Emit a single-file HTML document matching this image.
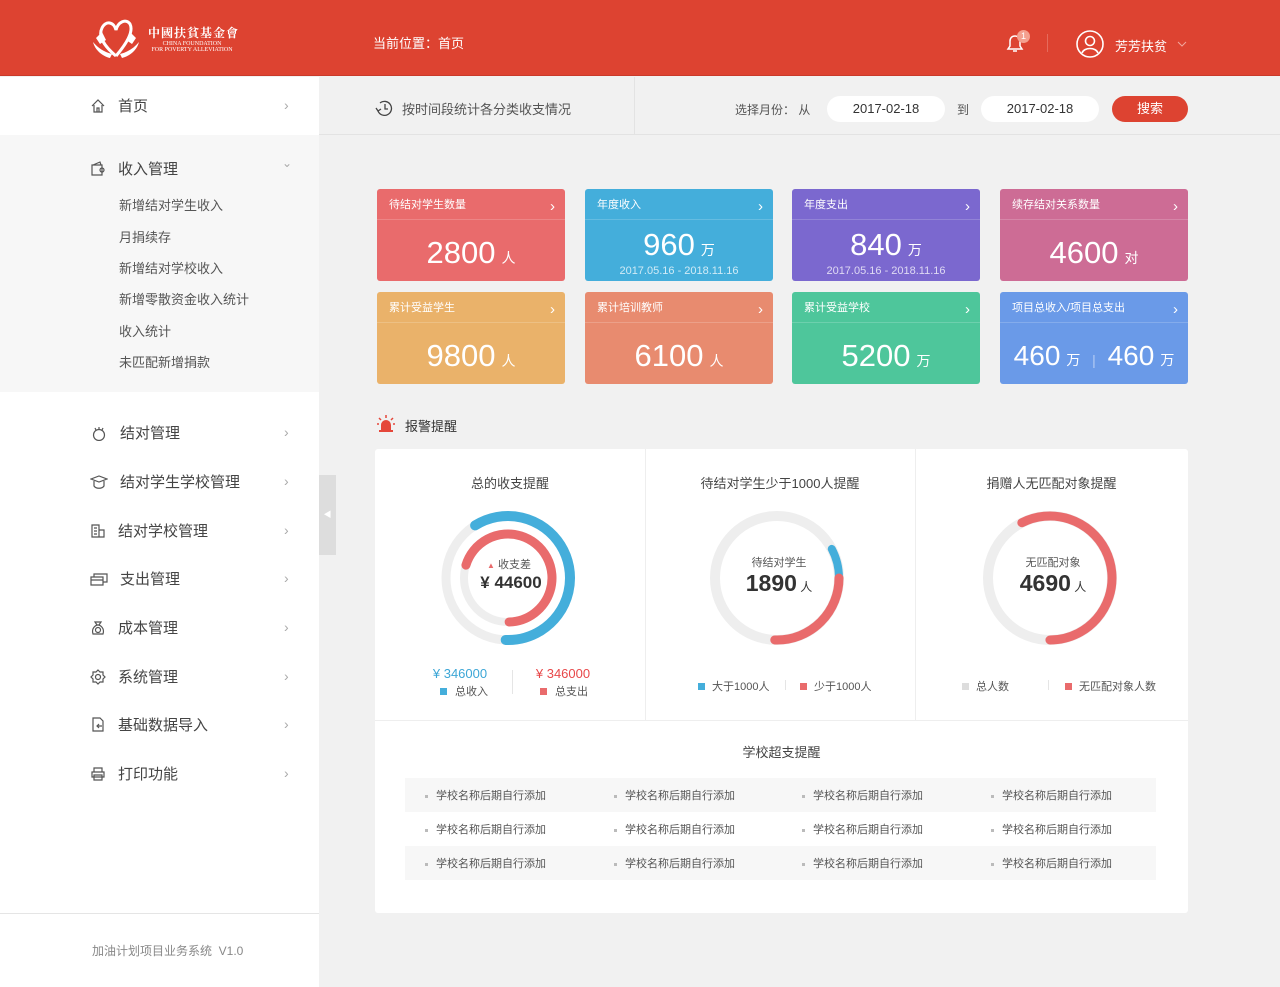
<!DOCTYPE html>
<html><head><meta charset="utf-8"><style>
*{margin:0;padding:0;box-sizing:border-box}
body{width:1280px;height:987px;position:relative;background:#f1f1f1;font-family:"Liberation Sans","Noto Sans CJK SC",sans-serif;overflow:hidden;color:#333}
.a{position:absolute}
.hdr{left:0;top:0;width:1280px;height:76px;background:#dd4331;border-bottom:1px solid #c93a2a}
.side{left:0;top:77px;width:319px;height:910px;background:#fff}
.mi{position:absolute;left:90px;font-size:15px;color:#444;display:flex;align-items:center}
.mi svg{margin-right:12px}
.arr{position:absolute;left:284px;color:#aaa;font-size:14px}
.sub{position:absolute;left:119px;font-size:13px;color:#555}
.card{position:absolute;width:188px;height:92px;border-radius:3px;color:#fff}
.card .t{height:31px;line-height:33px;font-size:11px;padding-left:12px;border-bottom:1px solid rgba(255,255,255,.18);position:relative}
.card .t:after{content:"›";position:absolute;right:10px;top:1px;font-size:15px}
.card .v{text-align:center;font-size:31px;line-height:38px;margin-top:14px}
.card .v small{font-size:14px;margin-left:6px}
.card .d{text-align:center;font-size:11px;opacity:.75;margin-top:-4px}
.sc{position:absolute;font-size:11px;color:#555}
.sc:before{content:"";display:inline-block;width:3px;height:3px;background:#bbb;margin-right:8px;vertical-align:middle}
</style></head><body>
<div class="a hdr"></div>
<svg class="a" style="left:90px;top:16px" width="52" height="46" viewBox="0 0 52 46"><path d="M26 40 C14 30 8 20 12 12 C16 4 24 6 26 14 C28 6 36 2 40 8 C44 16 36 28 26 40" fill="none" stroke="#fff" stroke-width="3"/><path d="M3 26 C8 32 14 36 22 38 L20 42 C12 40 5 34 3 26Z M49 26 C44 32 38 36 30 38 L32 42 C40 40 47 34 49 26Z M6 22 l6 -6 4 8 -6 4Z M46 22 l-6 -6 -4 8 6 4Z" fill="#fff"/></svg>
<div class="a" style="left:148px;top:24px;color:#fff;font-family:'Noto Serif CJK SC',serif;font-size:12px;letter-spacing:1px;font-weight:bold">中國扶貧基金會</div>
<div class="a" style="left:148px;top:41px;color:#fff;font-family:'Liberation Serif',serif;font-size:6px;line-height:6px;text-align:center;width:88px">CHINA FOUNDATION<br>FOR POVERTY ALLEVIATION</div>
<div class="a" style="left:373px;top:33px;color:#fff;font-size:13px">当前位置：首页</div>
<svg class="a" style="left:1004px;top:33px" width="22" height="22" viewBox="0 0 22 22"><path d="M4 16 L18 16 L16 13 L16 8 C16 5 14 3 11 3 C8 3 6 5 6 8 L6 13Z M9 18 L13 18" fill="none" stroke="#fff" stroke-width="1.5"/></svg>
<div class="a" style="left:1017px;top:30px;width:13px;height:13px;border-radius:50%;background:#f4a08f;color:#fff;font-size:9px;text-align:center;line-height:13px">1</div>
<div class="a" style="left:1047px;top:34px;width:1px;height:18px;background:#e66b5c"></div>
<svg class="a" style="left:1075px;top:29px" width="30" height="30" viewBox="0 0 30 30"><circle cx="15" cy="15" r="13" fill="none" stroke="#fff" stroke-width="1.6"/><circle cx="15" cy="12" r="4.5" fill="none" stroke="#fff" stroke-width="1.6"/><path d="M7 24 C9 18 21 18 23 24" fill="none" stroke="#fff" stroke-width="1.6"/></svg>
<div class="a" style="left:1115px;top:36px;color:#fff;font-size:13px">芳芳扶贫</div>
<svg class="a" style="left:1177px;top:41px" width="10" height="6"><path d="M1 1 L5 5 L9 1" fill="none" stroke="#f2a79d" stroke-width="1"/></svg>

<div class="a side"></div>
<div class="a" style="left:0;top:135px;width:319px;height:257px;background:#f7f7f7"></div>
<div class="a" style="left:0;top:913px;width:319px;height:1px;background:#e5e5e5"></div>
<div class="a" style="left:92px;top:942px;font-size:12px;color:#888">加油计划项目业务系统&nbsp; V1.0</div>
<div class="a" style="left:319px;top:475px;width:17px;height:80px;background:#ddd;color:#fff;font-size:8px;text-align:center;line-height:80px">◀</div>

<div class="mi" style="top:95px"><svg width="16" height="16" viewBox="0 0 16 16" fill="none" stroke="#555" stroke-width="1.2"><path d="M2 8 L8 2 L14 8 M4 7 V14 H12 V7 M7 14 V10 H9 V14"/></svg>首页</div><span class="arr" style="top:97px">›</span>
<div class="mi" style="top:158px"><svg width="16" height="16" viewBox="0 0 16 16" fill="none" stroke="#555" stroke-width="1.2"><path d="M2 4 H12 V14 H2Z M3 4 L10 1 L11 4"/><circle cx="12" cy="9" r="2"/></svg>收入管理</div><span class="arr" style="top:156px;left:282px;font-size:12px">⌄</span>
<div class="sub" style="top:195px">新增结对学生收入</div>
<div class="sub" style="top:227px">月捐续存</div>
<div class="sub" style="top:258px">新增结对学校收入</div>
<div class="sub" style="top:289px">新增零散资金收入统计</div>
<div class="sub" style="top:321px">收入统计</div>
<div class="sub" style="top:352px">未匹配新增捐款</div>
<div class="mi" style="top:422px"><svg width="18" height="16" viewBox="0 0 18 16" fill="none" stroke="#555" stroke-width="1.2"><circle cx="9" cy="10" r="5.5"/><path d="M5 3 l1 2 M9 2 v2 M13 3 l-1 2"/></svg>结对管理</div><span class="arr" style="top:424px">›</span>
<div class="mi" style="top:471px"><svg width="18" height="16" viewBox="0 0 18 16" fill="none" stroke="#555" stroke-width="1.2"><path d="M1 5 L9 2 L17 5 L9 8Z M4 7 V12 C6 15 12 15 14 12 V7"/></svg>结对学生学校管理</div><span class="arr" style="top:473px">›</span>
<div class="mi" style="top:520px"><svg width="16" height="16" viewBox="0 0 16 16" fill="none" stroke="#555" stroke-width="1.2"><path d="M2 2 H9 V14 H2Z M9 7 H14 V14 H9 M4 5 h3 M4 8 h3 M4 11 h3"/></svg>结对学校管理</div><span class="arr" style="top:522px">›</span>
<div class="mi" style="top:568px"><svg width="18" height="16" viewBox="0 0 18 16" fill="none" stroke="#555" stroke-width="1.2"><path d="M1 6 H13 V14 H1Z M1 9 H13 M4 6 V3 H17 V11 H13"/></svg>支出管理</div><span class="arr" style="top:570px">›</span>
<div class="mi" style="top:617px"><svg width="16" height="16" viewBox="0 0 16 16" fill="none" stroke="#555" stroke-width="1.2"><path d="M5 2 H11 L9 5 H7Z M3 14 C1 8 6 5 8 5 C10 5 15 8 13 14Z"/><circle cx="8" cy="10" r="2.5"/></svg>成本管理</div><span class="arr" style="top:619px">›</span>
<div class="mi" style="top:666px"><svg width="16" height="16" viewBox="0 0 16 16" fill="none" stroke="#555" stroke-width="1.2"><path d="M8 1 L10 3 L13 3 L13 6 L15 8 L13 10 L13 13 L10 13 L8 15 L6 13 L3 13 L3 10 L1 8 L3 6 L3 3 L6 3Z"/><circle cx="8" cy="8" r="2.5"/></svg>系统管理</div><span class="arr" style="top:668px">›</span>
<div class="mi" style="top:714px"><svg width="16" height="16" viewBox="0 0 16 16" fill="none" stroke="#555" stroke-width="1.2"><path d="M3 1 H10 L13 4 V14 H3Z M7 9 H12 M9 7 L7 9 L9 11"/></svg>基础数据导入</div><span class="arr" style="top:716px">›</span>
<div class="mi" style="top:763px"><svg width="16" height="16" viewBox="0 0 16 16" fill="none" stroke="#555" stroke-width="1.2"><path d="M4 6 V2 H12 V6 M2 6 H14 V11 H2Z M4 9 H12 V14 H4Z"/></svg>打印功能</div><span class="arr" style="top:765px">›</span>

<div class="a" style="left:319px;top:77px;width:961px;height:58px;border-bottom:1px solid #e3e3e3"></div>
<div class="a" style="left:634px;top:77px;width:1px;height:58px;background:#e3e3e3"></div>
<svg class="a" style="left:375px;top:99px" width="19" height="18" viewBox="0 0 19 18" fill="none" stroke="#444" stroke-width="1.3"><path d="M5 4 A7 7 0 1 1 3 12"/><path d="M10 5 V10 H13 M1 9 L3 12 L6 10"/></svg>
<div class="a" style="left:402px;top:99px;font-size:13px;color:#555">按时间段统计各分类收支情况</div>
<div class="a" style="left:735px;top:101px;font-size:12px;color:#555">选择月份： 从</div>
<div class="a" style="left:827px;top:96px;width:118px;height:26px;border-radius:13px;background:#fff;text-align:center;line-height:26px;font-size:13px;color:#333">2017-02-18</div>
<div class="a" style="left:957px;top:101px;font-size:12px;color:#555">到</div>
<div class="a" style="left:981px;top:96px;width:118px;height:26px;border-radius:13px;background:#fff;text-align:center;line-height:26px;font-size:13px;color:#333">2017-02-18</div>
<div class="a" style="left:1112px;top:96px;width:76px;height:26px;border-radius:13px;background:#dd4331;text-align:center;line-height:26px;font-size:13px;color:#fff">搜索</div>

<div class="card" style="left:377px;top:189px;background:#e96b6c"><div class="t">待结对学生数量</div><div class="v">2800<small>人</small></div></div>
<div class="card" style="left:585px;top:189px;background:#44aedb"><div class="t">年度收入</div><div class="v" style="margin-top:6px">960<small>万</small></div><div class="d">2017.05.16 - 2018.11.16</div></div>
<div class="card" style="left:792px;top:189px;background:#7b68cf"><div class="t">年度支出</div><div class="v" style="margin-top:6px">840<small>万</small></div><div class="d">2017.05.16 - 2018.11.16</div></div>
<div class="card" style="left:1000px;top:189px;background:#cd6c95"><div class="t">续存结对关系数量</div><div class="v">4600<small>对</small></div></div>
<div class="card" style="left:377px;top:292px;background:#eab26a"><div class="t">累计受益学生</div><div class="v">9800<small>人</small></div></div>
<div class="card" style="left:585px;top:292px;background:#e88b6f"><div class="t">累计培训教师</div><div class="v">6100<small>人</small></div></div>
<div class="card" style="left:792px;top:292px;background:#4ec69b"><div class="t">累计受益学校</div><div class="v">5200<small>万</small></div></div>
<div class="card" style="left:1000px;top:292px;background:#6a9ae8"><div class="t">项目总收入/项目总支出</div><div class="v" style="font-size:28px">460<small>万</small> <span style="font-size:14px;opacity:.5;margin:0 4px">|</span> 460<small>万</small></div></div>

<svg class="a" style="left:376px;top:414px" width="20" height="20" viewBox="0 0 20 20"><path d="M5 17 V11 A5 5 0 0 1 15 11 V17Z" fill="#e5473a"/><rect x="3" y="16" width="14" height="2" fill="#e5473a"/><path d="M10 1 V4 M3 4 L5 6 M17 4 L15 6 M1 10 H3 M17 10 H19" stroke="#e5473a" stroke-width="1.5"/></svg>
<div class="a" style="left:405px;top:416px;font-size:13px;color:#333">报警提醒</div>

<div class="a" style="left:375px;top:449px;width:813px;height:464px;background:#fff;border-radius:3px"></div>
<div class="a" style="left:645px;top:449px;width:1px;height:271px;background:#eee"></div>
<div class="a" style="left:915px;top:449px;width:1px;height:271px;background:#eee"></div>
<div class="a" style="left:375px;top:720px;width:813px;height:1px;background:#eee"></div>

<div class="a" style="left:375px;top:473px;width:270px;text-align:center;font-size:13px;color:#444">总的收支提醒</div>
<div class="a" style="left:645px;top:473px;width:270px;text-align:center;font-size:13px;color:#444">待结对学生少于1000人提醒</div>
<div class="a" style="left:915px;top:473px;width:273px;text-align:center;font-size:13px;color:#444">捐赠人无匹配对象提醒</div>

<svg class="a" style="left:375px;top:449px" width="813" height="271">
<g transform="translate(133,129)">
<circle r="62" fill="none" stroke="#eeeeee" stroke-width="9"/>
<circle r="44" fill="none" stroke="#eeeeee" stroke-width="8"/>
<circle r="62" fill="none" stroke="#44aedb" stroke-width="10" stroke-linecap="round" stroke-dasharray="231.6 400" transform="rotate(-122)"/>
<circle r="44" fill="none" stroke="#e96b6c" stroke-width="9" stroke-linecap="round" stroke-dasharray="192.8 300" transform="rotate(-163)"/>
</g>
<g transform="translate(402,129)">
<circle r="62" fill="none" stroke="#eeeeee" stroke-width="10"/>
<circle r="62" fill="none" stroke="#44aedb" stroke-width="8" stroke-linecap="round" stroke-dasharray="30 400" transform="rotate(-28)"/>
<circle r="62" fill="none" stroke="#e96b6c" stroke-width="9" stroke-linecap="round" stroke-dasharray="99.6 400" transform="rotate(0)"/>
</g>
<g transform="translate(675,129)">
<circle r="62" fill="none" stroke="#eeeeee" stroke-width="10"/>
<circle r="62" fill="none" stroke="#e96b6c" stroke-width="9" stroke-linecap="round" stroke-dasharray="224 400" transform="rotate(-117)"/>
</g>
</svg>
<div class="a" style="left:487px;top:556px;font-size:11px;color:#555"><span style="color:#e96b6c;font-size:8px">▲</span> 收支差</div>
<div class="a" style="left:451px;top:573px;width:120px;text-align:center;font-size:17px;font-weight:bold;color:#333">¥ 44600</div>
<div class="a" style="left:420px;top:666px;width:80px;text-align:center;font-size:13px;color:#3ca6d6">¥ 346000</div>
<div class="a" style="left:440px;top:683px;font-size:11px;color:#555"><span style="display:inline-block;width:7px;height:7px;background:#44aedb;margin-right:8px"></span>总收入</div>
<div class="a" style="left:512px;top:670px;width:1px;height:24px;background:#e5e5e5"></div>
<div class="a" style="left:523px;top:666px;width:80px;text-align:center;font-size:13px;color:#e8484a">¥ 346000</div>
<div class="a" style="left:540px;top:683px;font-size:11px;color:#555"><span style="display:inline-block;width:7px;height:7px;background:#e96b6c;margin-right:8px"></span>总支出</div>

<div class="a" style="left:719px;top:554px;width:120px;text-align:center;font-size:11px;color:#555">待结对学生</div>
<div class="a" style="left:719px;top:570px;width:120px;text-align:center;font-size:23px;font-weight:bold;color:#333">1890<span style="font-size:12px;font-weight:normal"> 人</span></div>
<div class="a" style="left:698px;top:678px;font-size:11px;color:#555"><span style="display:inline-block;width:7px;height:7px;background:#44aedb;margin-right:7px"></span>大于1000人</div>
<div class="a" style="left:785px;top:680px;width:1px;height:10px;background:#e5e5e5"></div>
<div class="a" style="left:800px;top:678px;font-size:11px;color:#555"><span style="display:inline-block;width:7px;height:7px;background:#e96b6c;margin-right:7px"></span>少于1000人</div>

<div class="a" style="left:993px;top:554px;width:120px;text-align:center;font-size:11px;color:#555">无匹配对象</div>
<div class="a" style="left:993px;top:570px;width:120px;text-align:center;font-size:23px;font-weight:bold;color:#333">4690<span style="font-size:12px;font-weight:normal"> 人</span></div>
<div class="a" style="left:962px;top:678px;font-size:11px;color:#555"><span style="display:inline-block;width:7px;height:7px;background:#ddd;margin-right:7px"></span>总人数</div>
<div class="a" style="left:1048px;top:680px;width:1px;height:10px;background:#e5e5e5"></div>
<div class="a" style="left:1065px;top:678px;font-size:11px;color:#555"><span style="display:inline-block;width:7px;height:7px;background:#e96b6c;margin-right:7px"></span>无匹配对象人数</div>

<div class="a" style="left:375px;top:742px;width:813px;text-align:center;font-size:13px;color:#444">学校超支提醒</div>
<div class="a" style="left:405px;top:778px;width:751px;height:34px;background:#f7f7f7"></div>
<div class="a" style="left:405px;top:846px;width:751px;height:34px;background:#f7f7f7"></div>
<div class="sc" style="left:425px;top:787px">学校名称后期自行添加</div><div class="sc" style="left:614px;top:787px">学校名称后期自行添加</div><div class="sc" style="left:802px;top:787px">学校名称后期自行添加</div><div class="sc" style="left:991px;top:787px">学校名称后期自行添加</div>
<div class="sc" style="left:425px;top:821px">学校名称后期自行添加</div><div class="sc" style="left:614px;top:821px">学校名称后期自行添加</div><div class="sc" style="left:802px;top:821px">学校名称后期自行添加</div><div class="sc" style="left:991px;top:821px">学校名称后期自行添加</div>
<div class="sc" style="left:425px;top:855px">学校名称后期自行添加</div><div class="sc" style="left:614px;top:855px">学校名称后期自行添加</div><div class="sc" style="left:802px;top:855px">学校名称后期自行添加</div><div class="sc" style="left:991px;top:855px">学校名称后期自行添加</div>
</body></html>
